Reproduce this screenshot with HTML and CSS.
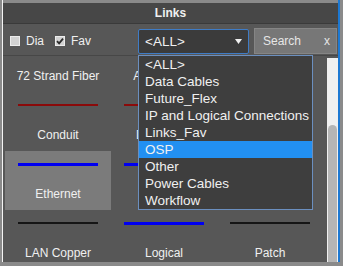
FILE: index.html
```html
<!DOCTYPE html>
<html lang="en">
<head>
    <meta charset="UTF-8">
    <meta name="viewport" content="width=device-width, initial-scale=1.0">
    <title>Links</title>
    <link rel="stylesheet" href="styles.css">
</head>
<body>
    <div class="panel">
        <div class="header">Links</div>
        <div class="toolbar">
            <label class="check"><span class="box"></span>Dia</label>
            <label class="check"><span class="box"><svg width="8" height="8" viewBox="0 0 8 8"><path d="M1 4.2 L3.1 6.3 L7 1.6" fill="none" stroke="#2b2b2b" stroke-width="1.8"/></svg></span>Fav</label>
            <div class="select">
                <span>&lt;ALL&gt;</span>
                <svg class="arrow" width="7" height="5" viewBox="0 0 7 5"><path d="M0 0 H7 L3.5 5 Z" fill="#f0f0f0"/></svg>
                <ul class="dropdown">
                    <li>&lt;ALL&gt;</li>
                    <li>Data Cables</li>
                    <li>Future_Flex</li>
                    <li>IP and Logical Connections</li>
                    <li>Links_Fav</li>
                    <li class="active">OSP</li>
                    <li>Other</li>
                    <li>Power Cables</li>
                    <li>Workflow</li>
                </ul>
            </div>
            <div class="search"><span>Search</span><span>x</span></div>
        </div>
        <div class="content">
            <div class="grid-wrap">
                <div class="grid">
                    <div class="cell"><div class="line red"></div><div class="name">72 Strand Fiber</div></div>
                    <div class="cell"><div class="line red"></div><div class="name">Aerial Fiber</div></div>
                    <div class="cell"><div class="line black"></div><div class="name">Backbone</div></div>
                    <div class="cell"><div class="line red"></div><div class="name">Conduit</div></div>
                    <div class="cell"><div class="line red"></div><div class="name">Dark Fiber</div></div>
                    <div class="cell"><div class="line black"></div><div class="name">Drop</div></div>
                    <div class="cell selected"><div class="line blue"></div><div class="name">Ethernet</div></div>
                    <div class="cell"><div class="line blue"></div><div class="name">IP Link</div></div>
                    <div class="cell"><div class="line black"></div><div class="name">Jumper</div></div>
                    <div class="cell"><div class="line black"></div><div class="name">LAN Copper</div></div>
                    <div class="cell"><div class="line blue"></div><div class="name">Logical</div></div>
                    <div class="cell"><div class="line black"></div><div class="name">Patch</div></div>
                </div>
            </div>
            <div class="scrollbar"><div class="thumb"></div></div>
        </div>
    </div>
</body>
</html>
```

FILE: styles.css
```css
body {
    margin: 0;
    background-color: #8a8a8a;
    font-family: "Liberation Sans", Arial, sans-serif;
    color: #f0f0f0;
}
.panel {
    margin-left: 2px;
    width: 338px;
    height: 262px;
    box-sizing: border-box;
    padding-top: 3px;
    border-left: 1px solid #f4f4f4;
    border-right: 2px solid #1c78d2;
    display: flex;
    flex-direction: column;
}
.header {
    height: 21px;
    box-sizing: border-box;
    line-height: 20px;
    background-color: #474747;
    border-bottom: 1px solid #3a3a3a;
    text-align: center;
    font-size: 12px;
    font-weight: bold;
}
.toolbar {
    height: 32px;
    box-sizing: border-box;
    padding: 4px 1px 1px 7px;
    background-color: #575757;
    border-bottom: 1px solid #474747;
    display: flex;
    align-items: center;
    font-size: 12px;
}
.check {
    display: flex;
    align-items: center;
    gap: 6px;
    margin-right: 11px;
}
.box {
    width: 10px;
    height: 10px;
    box-sizing: border-box;
    background-color: #d2d2d2;
    border: 1px solid #ececec;
    display: flex;
    align-items: center;
    justify-content: center;
}
.select {
    position: relative;
    margin-left: auto;
    width: 111px;
    height: 25px;
    box-sizing: border-box;
    padding: 0 6px;
    background-color: #3b3b3b;
    border: 1px solid #3f7cc6;
    border-radius: 2px;
    display: flex;
    align-items: center;
    justify-content: space-between;
    font-size: 13.5px;
}
.dropdown {
    position: absolute;
    top: 25px;
    left: -1px;
    width: 175px;
    box-sizing: border-box;
    margin: 0;
    padding: 0;
    list-style: none;
    background-color: #3e3e3e;
    border: 1px solid #6b8fbf;
    z-index: 2;
}
.dropdown li {
    height: 17px;
    line-height: 17px;
    padding-left: 6px;
}
.dropdown li.active { background-color: #2290f2; }
.search {
    margin-left: 5px;
    width: 83px;
    height: 26px;
    box-sizing: border-box;
    padding: 0 6px 0 8px;
    background-color: #777777;
    border: 1px solid #858585;
    display: flex;
    align-items: center;
    justify-content: space-between;
    color: #e6e6e6;
}
.content {
    flex: 1;
    display: flex;
    background-color: #575757;
    overflow: hidden;
}
.grid-wrap {
    flex: 1;
    padding-left: 2px;
    overflow: hidden;
}
.grid {
    margin-top: -23px;
    display: grid;
    grid-template-columns: repeat(3, 106px);
    grid-auto-rows: 59px;
}
.cell {
    padding-top: 12px;
    display: flex;
    flex-direction: column;
    align-items: center;
}
.cell.selected { background-color: #7b7b7b; }
.line {
    width: 80px;
    height: 2px;
    margin-bottom: 1px;
}
.line.red { background-color: #8b0a0a; }
.line.black { background-color: #151515; }
.line.blue { background-color: #0000f0; height: 3px; margin-bottom: 0; }
.name {
    margin-top: 21px;
    font-size: 12px;
    line-height: 14px;
}
.scrollbar {
    width: 11px;
    margin-top: 2px;
    background-color: #f0f0f0;
    display: flex;
    flex-direction: column;
    justify-content: flex-end;
}
.thumb {
    height: 137px;
    margin: 0 1px;
    background-color: #b5b5b5;
    border-radius: 5px 5px 0 0;
}
```
